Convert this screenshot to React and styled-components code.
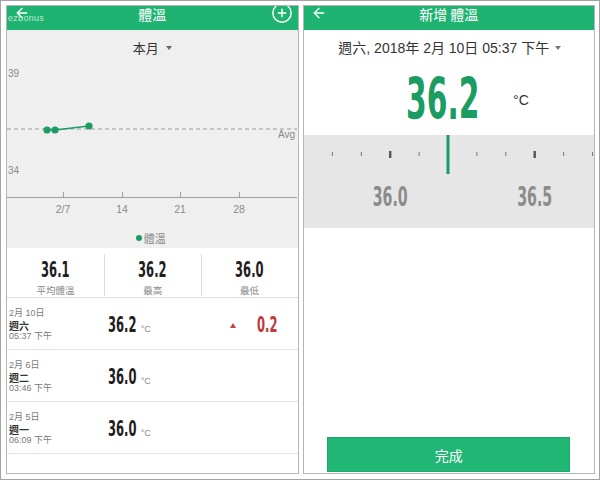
import React from "react";
import styled, { createGlobalStyle } from "styled-components";
import { ArrowLeft, CirclePlus } from "lucide-react";

const GlobalStyle = createGlobalStyle`
  html, body { margin: 0; padding: 0; background: #fff; }
  body { font-family: "Liberation Sans", "Noto Sans CJK TC", sans-serif; }
`;

const GREEN = "#1fb371";
const DEEP_GREEN = "#1a9c63";
const NUM_FONT = `"DejaVu Sans Condensed", "DejaVu Sans", sans-serif`;

const Frame = styled.div`
  width: 600px;
  height: 480px;
  box-sizing: border-box;
  border: 1px solid #a3a3a3;
  padding: 4px 4px 5px 5px;
  display: flex;
  gap: 4px;
  background: #fff;
`;

const Panel = styled.div`
  flex: 1;
  min-width: 0;
  border: 1px solid #b5b5b5;
  display: flex;
  flex-direction: column;
  overflow: hidden;
  background: #fff;
`;

const Header = styled.header`
  position: relative;
  flex: none;
  height: 24px;
  background: ${GREEN};
  color: #fff;
  display: grid;
  grid-template-columns: 44px 1fr 44px;
  align-items: start;
`;

const HeaderTitle = styled.div`
  text-align: center;
  font-size: 14px;
  line-height: 16px;
  font-family: "Noto Sans CJK TC", sans-serif;
`;

const IconSlot = styled.div`
  display: flex;
  justify-content: ${p => (p.$right ? "flex-end" : "flex-start")};
  padding: 0 ${p => (p.$right ? "5px" : "0")} 0 ${p => (p.$right ? "0" : "7px")};
  margin-top: ${p => p.$top || 0}px;
`;

const Watermark = styled.span`
  position: absolute;
  left: 1px;
  top: 7px;
  font-size: 9px;
  letter-spacing: 0.3px;
  color: rgba(255, 255, 255, 0.7);
`;

const Digits = styled.span`
  display: inline-block;
  font-family: ${NUM_FONT};
  font-weight: 700;
  font-size: ${p => p.$size}px;
  line-height: 1;
  color: ${p => p.$color || "#1e1e1e"};
  transform: scaleX(${p => p.$sx || 0.61});
  transform-origin: ${p => p.$origin || "center"};
`;

/* ---------- left: chart ---------- */

const ChartArea = styled.section`
  background: #efefef;
  display: flex;
  flex-direction: column;
  flex: none;
`;

const RangeSelect = styled.div`
  height: 34px;
  display: flex;
  align-items: center;
  justify-content: center;
  gap: 7px;
  font-size: 13px;
  color: #333;
  font-family: "Noto Sans CJK TC", sans-serif;
`;

const Caret = styled.span`
  width: 0;
  height: 0;
  border-left: 3.5px solid transparent;
  border-right: 3.5px solid transparent;
  border-top: 4px solid ${p => p.$color || "#666"};
  margin-top: 1px;
`;

const Legend = styled.div`
  height: 20px;
  display: flex;
  align-items: center;
  justify-content: center;
  gap: 2px;
  padding-right: 3px;
  font-size: 11px;
  color: #8a8a8a;
  font-family: "Noto Sans CJK TC", sans-serif;
`;

const LegendDot = styled.span`
  width: 6px;
  height: 6px;
  border-radius: 50%;
  background: ${DEEP_GREEN};
`;

const Stats = styled.div`
  flex: none;
  height: 49px;
  display: grid;
  grid-template-columns: repeat(3, 1fr);
  border-bottom: 1px solid #dedede;
`;

const Stat = styled.div`
  margin: 6px 0 0;
  height: 36px;
  padding-top: 6px;
  display: flex;
  flex-direction: column;
  align-items: center;
  border-left: ${p => (p.$divider ? "1px solid #dcdcdc" : "none")};
`;

const StatLabel = styled.div`
  margin-top: 3px;
  font-size: 9.5px;
  line-height: 12px;
  color: #8a8a8a;
  font-family: "Noto Sans CJK TC", sans-serif;
`;

const Row = styled.div`
  flex: none;
  height: 51px;
  box-sizing: content-box;
  display: grid;
  grid-template-columns: 99px 1fr auto;
  align-items: center;
  padding: 0 20px 0 2px;
  border-bottom: 1px solid #e2e2e2;
`;

const DateCol = styled.div`
  display: flex;
  flex-direction: column;
  padding-top: 4px;
  font-family: "Liberation Sans", "Noto Sans CJK TC", sans-serif;
`;

const DateLine = styled.div`
  font-size: 9px;
  line-height: 11.5px;
  color: #7a7a7a;
`;

const Weekday = styled.div`
  font-size: 10px;
  line-height: 11.5px;
  font-weight: 700;
  color: #333;
  font-family: "Noto Sans CJK TC", sans-serif;
`;

const Reading = styled.div`
  display: flex;
  align-items: baseline;
  padding-top: 4px;
`;

const Unit = styled.span`
  font-size: ${p => p.$size || 9}px;
  color: ${p => p.$color || "#888"};
  margin-left: ${p => p.$gap || 0}px;
`;

const Delta = styled.div`
  display: flex;
  align-items: center;
  gap: 8px;
  padding-top: 4px;
`;

const UpTriangle = styled.span`
  width: 0;
  height: 0;
  border-left: 3.5px solid transparent;
  border-right: 3.5px solid transparent;
  border-bottom: 5px solid #c7403f;
`;

/* ---------- right: entry ---------- */

const DateSelect = styled.div`
  flex: none;
  height: 34px;
  display: flex;
  align-items: center;
  justify-content: center;
  gap: 6px;
  font-size: 14px;
  color: #333;
  padding-left: 2px;
`;

const BigRow = styled.div`
  flex: none;
  height: 71px;
  display: flex;
  align-items: center;
  padding-left: 102px;
`;

const Ruler = styled.div`
  flex: none;
  height: 93px;
  background: #e6e6e6;
`;

const Spacer = styled.div`
  flex: 1;
`;

const DoneButton = styled.button`
  flex: none;
  align-self: center;
  width: 243px;
  height: 35px;
  margin-bottom: 1px;
  border: 1px solid #23a86c;
  background: #20b774;
  color: #fff;
  font-size: 14px;
  font-family: "Noto Sans CJK TC", sans-serif;
`;

const chartPoints = [
  [40, 66],
  [48, 66],
  [82, 62],
];
const xTicks = [
  [56, "2/7"],
  [115, "14"],
  [173, "21"],
  [232, "28"],
];

function TempChart() {
  return (
    <svg width="290" height="164" style={{ display: "block" }}>
      <g fontFamily="Liberation Sans, sans-serif" fontSize="10" fill="#8a8a8a">
        <text x="1" y="13">39</text>
        <text x="1" y="110">34</text>
        <text x="288" y="74" textAnchor="end">Avg</text>
      </g>
      <line x1="0" y1="65" x2="290" y2="65" stroke="#9a9a9a" strokeDasharray="4 3" />
      <polyline
        points={chartPoints.map(p => p.join(",")).join(" ")}
        fill="none"
        stroke={DEEP_GREEN}
        strokeWidth="1.6"
      />
      {chartPoints.map(([x, y]) => (
        <circle key={x} cx={x} cy={y} r="3.6" fill={DEEP_GREEN} />
      ))}
      <line x1="0" y1="133.5" x2="290" y2="133.5" stroke="#a0a0a0" />
      {xTicks.map(([x, label]) => (
        <g key={label}>
          <line x1={x + 0.5} y1="128" x2={x + 0.5} y2="133" stroke="#a0a0a0" />
          <text
            x={x}
            y="149"
            textAnchor="middle"
            fontFamily="Liberation Sans, sans-serif"
            fontSize="10.5"
            fill="#8a8a8a"
          >
            {label}
          </text>
        </g>
      ))}
    </svg>
  );
}

function RulerScale() {
  const center = 144;
  const step = 28.9;
  const ticks = [];
  for (let k = -5; k <= 5; k++) {
    if (k === 0) continue;
    const major = (k + 2) % 5 === 0;
    ticks.push({ x: center + k * step, major });
  }
  return (
    <svg width="290" height="93" style={{ display: "block" }}>
      {ticks.map(({ x, major }) =>
        major ? (
          <rect key={x} x={x - 1.2} y="16" width="2.4" height="7" fill="#555" />
        ) : (
          <rect key={x} x={x - 0.5} y="17" width="1" height="4" fill="#777" />
        )
      )}
      <rect x={center - 1.5} y="0" width="3" height="39" fill={DEEP_GREEN} />
      <g
        fontFamily={NUM_FONT}
        fontWeight="700"
        fontSize="27"
        fill="#8c8c8c"
        textAnchor="middle"
      >
        <text x={center - 2 * step} y="71" textLength="35" lengthAdjust="spacingAndGlyphs">
          36.0
        </text>
        <text x={center + 3 * step} y="71" textLength="35" lengthAdjust="spacingAndGlyphs">
          36.5
        </text>
      </g>
    </svg>
  );
}

const records = [
  { date: "2月 10日", day: "週六", time: "05:37 下午", value: "36.2", delta: "0.2" },
  { date: "2月 6日", day: "週二", time: "03:46 下午", value: "36.0" },
  { date: "2月 5日", day: "週一", time: "06:09 下午", value: "36.0" },
];

const stats = [
  { value: "36.1", label: "平均體溫" },
  { value: "36.2", label: "最高" },
  { value: "36.0", label: "最低" },
];

export default function App() {
  return (
    <>
      <GlobalStyle />
      <Frame>
        <Panel>
          <Header>
            <Watermark>ezbonus</Watermark>
            <IconSlot $top={-1}>
              <ArrowLeft size={16} strokeWidth={2} color="#fff" />
            </IconSlot>
            <HeaderTitle>體溫</HeaderTitle>
            <IconSlot $right $top={-4}>
              <CirclePlus size={22} strokeWidth={1.6} color="#fff" />
            </IconSlot>
          </Header>

          <ChartArea>
            <RangeSelect>
              本月 <Caret />
            </RangeSelect>
            <TempChart />
            <Legend>
              <LegendDot />
              體溫
            </Legend>
          </ChartArea>

          <Stats>
            {stats.map((s, i) => (
              <Stat key={s.label} $divider={i > 0}>
                <Digits $size={21}>{s.value}</Digits>
                <StatLabel>{s.label}</StatLabel>
              </Stat>
            ))}
          </Stats>

          {records.map(r => (
            <Row key={r.date}>
              <DateCol>
                <DateLine>{r.date}</DateLine>
                <Weekday>{r.day}</Weekday>
                <DateLine>{r.time}</DateLine>
              </DateCol>
              <Reading>
                <Digits $size={21} $origin="left">{r.value}</Digits>
                <Unit $gap={-14}>°C</Unit>
              </Reading>
              {r.delta ? (
                <Delta>
                  <UpTriangle />
                  <Digits $size={21} $color="#c0393b" $origin="right">
                    {r.delta}
                  </Digits>
                </Delta>
              ) : (
                <span />
              )}
            </Row>
          ))}
        </Panel>

        <Panel>
          <Header>
            <IconSlot $top={-1}>
              <ArrowLeft size={16} strokeWidth={2} color="#fff" />
            </IconSlot>
            <HeaderTitle>新增 體溫</HeaderTitle>
            <span />
          </Header>

          <DateSelect>
            週六, 2018年 2月 10日 05:37 下午 <Caret $color="#777" />
          </DateSelect>

          <BigRow>
            <Digits $size={57} $color={DEEP_GREEN} $sx={0.58} $origin="left">
              36.2
            </Digits>
            <Unit $size={14} $color="#333" $gap={-19}>
              °C
            </Unit>
          </BigRow>

          <Ruler>
            <RulerScale />
          </Ruler>

          <Spacer />
          <DoneButton>完成</DoneButton>
        </Panel>
      </Frame>
    </>
  );
}
